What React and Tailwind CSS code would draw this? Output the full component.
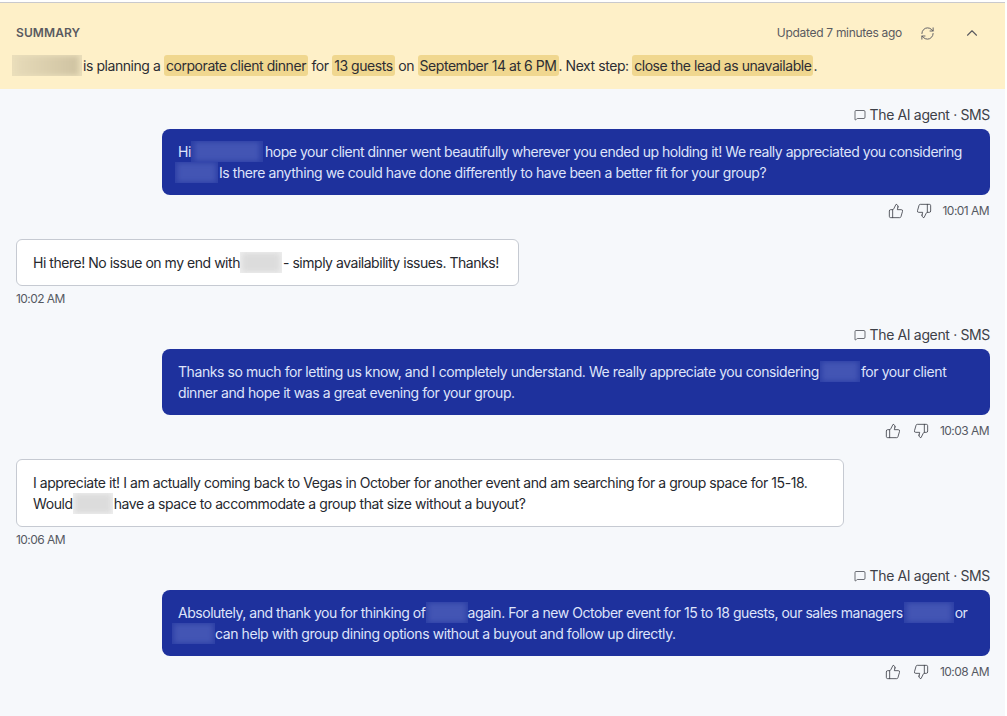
import { ThumbsUp, ThumbsDown, RefreshCw, ChevronUp, MessageSquare } from 'lucide-react';

function Blur({ w, tone = 'dark', className = '' }) {
  const outer =
    tone === 'dark'
      ? 'bg-[#2c3fa6]'
      : tone === 'light'
        ? 'bg-[#eeeeee]'
        : 'bg-[#ebdfbb]';
  const inner =
    tone === 'dark'
      ? 'bg-[#4355b4]'
      : tone === 'light'
        ? 'bg-[#dcdcdc]'
        : 'bg-linear-to-r from-[#e6dab8] to-[#cfc3a2]';
  return (
    <span className={`inline-block align-top overflow-hidden h-[21px] ${outer} ${className}`} style={{ width: w }}>
      <span className={`block w-full h-full blur-[3px] scale-90 ${inner}`} />
    </span>
  );
}

function Hl({ children }) {
  return <span className="bg-[#f0d78f] rounded-[3px] px-[2px] py-[2px]">{children}</span>;
}

function AgentMessage({ time, children }) {
  return (
    <div className="flex flex-col items-end">
      <div className="flex items-center gap-1 h-[19px] text-[14px] tracking-[-0.35px] text-[#3d4048] mb-[5px]">
        <MessageSquare size={12} strokeWidth={1.5} />
        <span>The AI agent · SMS</span>
      </div>
      <div className="w-[828px] bg-[#1e319d] text-[#dfe4fa] rounded-lg px-4 py-3 text-[14px] leading-[21px] tracking-[-0.42px] whitespace-nowrap">
        {children}
      </div>
      <div className="flex items-center h-5 mt-1.5 pr-[1px] text-[#3d4048]">
        <ThumbsUp size={16} strokeWidth={1.25} />
        <ThumbsDown size={16} strokeWidth={1.25} className="ml-[12px]" />
        <span className="ml-[11px] text-[12px] tracking-[-0.55px] text-[#555962]">{time}</span>
      </div>
    </div>
  );
}

function UserMessage({ time, width, children }) {
  return (
    <div className="flex flex-col items-start">
      <div
        className="bg-white border border-[#c6cad2] rounded-md px-4 py-3 text-[14px] leading-[21px] text-[#26282e] whitespace-nowrap"
        style={{ width }}
      >
        {children}
      </div>
      <div className="mt-[5px] h-4 text-[12px] leading-4 tracking-[-0.55px] text-[#555962]">{time}</div>
    </div>
  );
}

export default function App() {
  return (
    <div className="w-[1007px] h-[716px] overflow-hidden bg-white font-['Inter','Liberation_Sans',sans-serif] tracking-[-0.42px]">
      <div className="w-[1005px] h-full pt-[2px]">
        <div className="border-t border-[#c9c9ce] h-full bg-[#f6f8fb]">
          <div className="h-[86px] bg-[#fef0c8] pt-[20px] pl-[12px] pr-[17px]">
            <div className="flex items-center justify-between h-5 pl-1">
              <span className="text-[12px] font-semibold text-[#5a5a60] tracking-[0.1px]">SUMMARY</span>
              <div className="flex items-center text-[#5a5a60]">
                <span className="text-[12px] tracking-[-0.3px]">Updated 7 minutes ago</span>
                <RefreshCw size={15} strokeWidth={1.5} className="ml-[18px]" />
                <ChevronUp size={18} strokeWidth={1.5} className="ml-[28px] mr-[7px]" />
              </div>
            </div>
            <p className="mt-[12px] text-[14px] leading-[21px] text-[#2d2d33] tracking-[-0.44px] whitespace-nowrap">
              <Blur w={70} tone="tan" className="mr-[1px]" />is planning a <Hl>corporate client dinner</Hl> for <Hl>13 guests</Hl> on{' '}
              <Hl>September 14 at 6 PM</Hl>. Next step: <Hl>close the lead as unavailable</Hl>.
            </p>
          </div>
          <div className="flex flex-col gap-[18px] pt-4 pl-4 pr-[15px]">
            <AgentMessage time="10:01 AM">
              <span className="tracking-[-0.46px]">
                Hi<Blur w={72} className="mr-[2px]" />hope your client dinner went beautifully wherever you ended up holding it! We really
                appreciated you considering
              </span>
              <br />
              <Blur w={43} className="ml-[-3px] mr-[1px]" />Is there anything we could have done differently to have been a better fit for your group?
            </AgentMessage>
            <UserMessage time="10:02 AM" width={503}>
              <span className="tracking-[-0.47px]">
                Hi there! No issue on my end with
                <Blur w={42} tone="light" className="mr-[1px]" />- simply availability issues. Thanks!
              </span>
            </UserMessage>
            <AgentMessage time="10:03 AM">
              Thanks so much for letting us know, and I completely understand. We really appreciate you considering
              <Blur w={40} className="mx-[1px]" />for your client
              <br />
              dinner and hope it was a great evening for your group.
            </AgentMessage>
            <UserMessage time="10:06 AM" width={828}>
              <span className="tracking-[-0.44px]">
                I appreciate it! I am actually coming back to Vegas in October for another event and am searching for a
                group space for 15-18.
              </span>
              <br />
              Would
              <Blur w={40} tone="light" className="mr-[1px]" />have a space to accommodate a group that size without a buyout?
            </UserMessage>
            <AgentMessage time="10:08 AM">
              <span className="tracking-[-0.47px]">
                Absolutely, and thank you for thinking of
                <Blur w={42} />again. For a new October event for 15 to 18 guests, our sales managers
                <Blur w={50} className="mx-[1px]" />or
              </span>
              <br />
              <Blur w={43} className="ml-[-6px]" />can help with group dining options without a buyout and follow up
              directly.
            </AgentMessage>
          </div>
        </div>
      </div>
    </div>
  );
}
